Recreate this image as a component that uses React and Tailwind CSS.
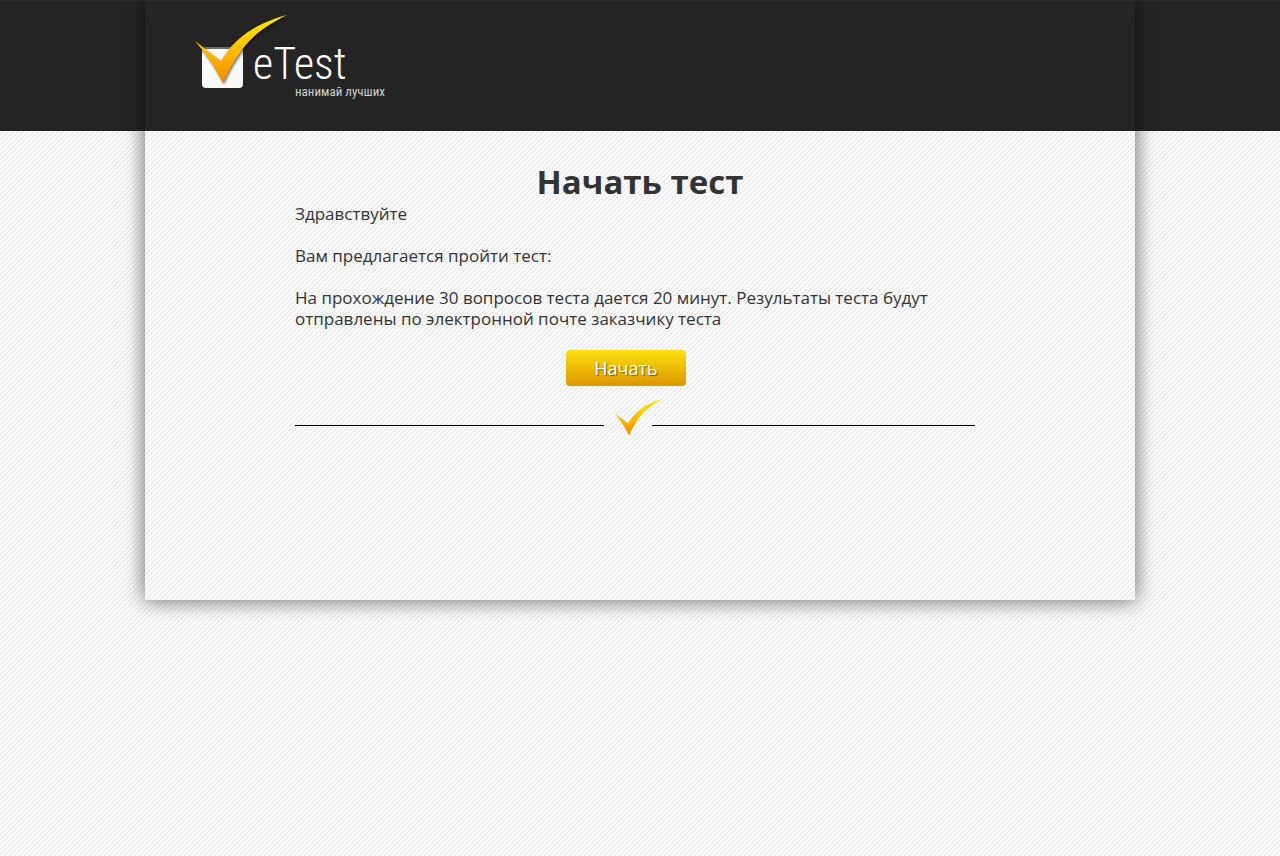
const pageBackground =
  "bg-[linear-gradient(#2d2d2d_0_1px,#242424_1px_128px,#222222_131px),linear-gradient(135deg,#e5e5e5_0%,#fdfdfd_14%,#fdfdfd_36%,#e5e5e5_50%,#fdfdfd_64%,#fdfdfd_86%,#e5e5e5_100%)] bg-[size:100%_131px,5px_5px] [background-repeat:no-repeat,repeat]";

function CheckMark({ id, className }) {
  return (
    <svg viewBox="0 0 92 68" className={className} aria-hidden="true">
      <defs>
        <linearGradient id={id} x1="0" y1="0" x2="0" y2="1">
          <stop offset="0" stopColor="#ffea00" />
          <stop offset="0.4" stopColor="#ffc800" />
          <stop offset="1" stopColor="#f58a00" />
        </linearGradient>
      </defs>
      <path
        d="M0 26 L26 46 C38 25 58 9 92 0 C64 14 46 28 28 68 C20 52 12 40 0 26 Z"
        fill={`url(#${id})`}
      />
    </svg>
  );
}

function Logo() {
  return (
    <a href="#" className="relative flex h-[85px] w-[200px] items-start text-white">
      <span className="mt-8 ml-[7px] h-[41px] w-[41px] rounded border-t-2 border-[#6a6a6a] bg-[#fafafa]" />
      <CheckMark
        id="logo-check"
        className="absolute top-0 left-0 h-[68px] w-[92px] drop-shadow-[1px_2px_1px_rgba(0,0,0,0.5)]"
      />
      <span className="mt-7 ml-[10px] flex flex-col font-['Roboto_Condensed','Liberation_Sans',sans-serif] font-light">
        <span className="text-[44px] leading-[42px]">eTest</span>
        <span className="ml-[42px] text-[13px] leading-[13px] font-normal text-[#d0d0d0]">
          нанимай лучших
        </span>
      </span>
    </a>
  );
}

export default function App() {
  const handleSubmit = (e) => {
    e.preventDefault();
  };

  return (
    <div className={`min-h-screen text-[#333] font-['Open_Sans',sans-serif] ${pageBackground}`}>
      <div className="mx-auto min-h-[600px] max-w-[990px] shadow-[0_0_20px_rgba(0,0,0,0.6)]">
        <header className="h-[131px] px-[50px] pt-[15px]">
          <Logo />
        </header>

        <main className="mx-auto max-w-[690px] pt-[30px]">
          <h1 className="text-center text-[33px] leading-[42px] font-bold">Начать тест</h1>
          <div className="space-y-[21px] text-[17px] leading-[21px]">
            <p>Здравствуйте</p>
            <p>Вам предлагается пройти тест:</p>
            <p>
              На прохождение 30 вопросов теста дается 20 минут. Результаты теста будут
              отправлены по электронной почте заказчику теста
            </p>
          </div>

          <form onSubmit={handleSubmit} className="mt-[21px] flex max-w-[662px] justify-center">
            <button
              type="submit"
              className="h-9 w-[120px] rounded bg-linear-to-b from-[#fbe112] to-[#dc9600] text-[18px] text-white [text-shadow:1px_1px_1px_rgba(0,0,0,0.5)]"
            >
              Начать
            </button>
          </form>

          <div className="mt-3 flex max-w-[680px] items-end">
            <span className="mb-[10px] h-px w-[309px] bg-black" />
            <CheckMark id="divider-check" className="ml-[10px] h-[38px] w-[50px]" />
            <span className="mb-[10px] -ml-3 h-px flex-1 bg-black" />
          </div>
        </main>
      </div>
    </div>
  );
}
